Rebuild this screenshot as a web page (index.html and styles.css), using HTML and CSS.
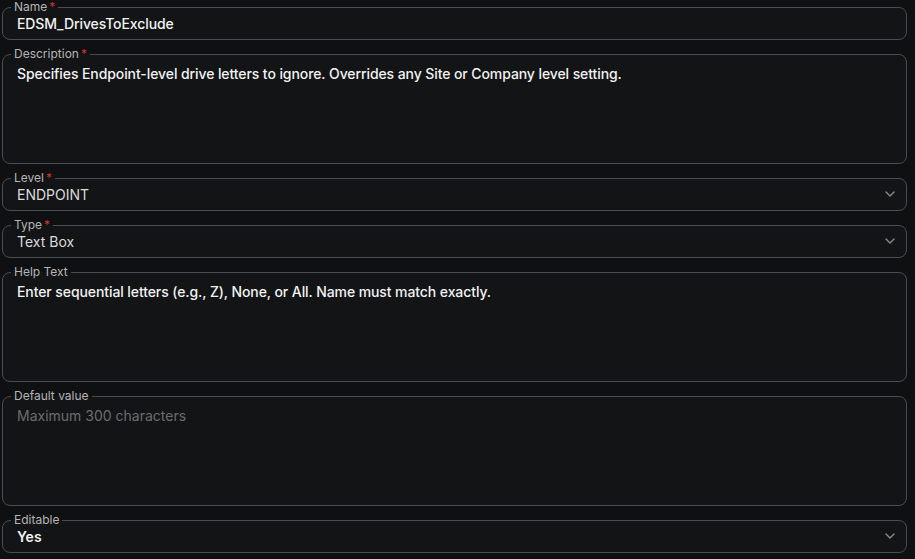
FILE: index.html
```html
<!DOCTYPE html>
<html lang="en">
<head>
    <meta charset="UTF-8">
    <meta name="viewport" content="width=device-width, initial-scale=1.0">
    <title>Custom Field - EDSM_DrivesToExclude</title>
    <link rel="stylesheet" href="styles.css">
</head>
<body>
    <form class="field-form">
        <fieldset class="field">
            <legend>Name<span class="req">*</span></legend>
            <div class="value strong">EDSM_DrivesToExclude</div>
        </fieldset>

        <fieldset class="field">
            <legend>Description<span class="req">*</span></legend>
            <div class="value strong multi">Specifies Endpoint-level drive letters to ignore. Overrides any Site or Company level setting.</div>
        </fieldset>

        <fieldset class="field">
            <legend>Level<span class="req">*</span></legend>
            <div class="value select">
                <span>ENDPOINT</span>
                <svg class="chevron" viewBox="0 0 10 6" width="10" height="6"><path d="M1 1l4 4 4-4"/></svg>
            </div>
        </fieldset>

        <fieldset class="field">
            <legend>Type<span class="req">*</span></legend>
            <div class="value select">
                <span>Text Box</span>
                <svg class="chevron" viewBox="0 0 10 6" width="10" height="6"><path d="M1 1l4 4 4-4"/></svg>
            </div>
        </fieldset>

        <fieldset class="field">
            <legend>Help Text</legend>
            <div class="value strong multi">Enter sequential letters (e.g., Z), None, or All. Name must match exactly.</div>
        </fieldset>

        <fieldset class="field">
            <legend>Default value</legend>
            <div class="value multi placeholder">Maximum 300 characters</div>
        </fieldset>

        <fieldset class="field">
            <legend>Editable</legend>
            <div class="value select">
                <span class="bold">Yes</span>
                <svg class="chevron" viewBox="0 0 10 6" width="10" height="6"><path d="M1 1l4 4 4-4"/></svg>
            </div>
        </fieldset>
    </form>
</body>
</html>
```

FILE: styles.css
```css
html, body {
    margin: 0;
    background: #0f1012;
}
body {
    font-family: Inter, "Noto Sans", sans-serif;
    color: #e6e6e6;
}
.field-form {
    display: flex;
    flex-direction: column;
    gap: 7px;
    width: 905px;
    padding-left: 2px;
}
.field {
    margin: 0;
    padding: 0 8px;
    border: 1px solid #4b4c50;
    border-radius: 8px;
    background: #131416;
    min-width: 0;
}
.field legend {
    padding: 0 3px;
    font-size: 12px;
    line-height: 14px;
    color: #b5b5b5;
}
.req {
    color: #c8343a;
    margin-left: 2px;
}
.value {
    height: 32px;
    margin-top: -7px;
    padding-left: 6px;
    display: flex;
    align-items: center;
    font-size: 14px;
    color: #dcdcdc;
}
.value.strong {
    font-weight: 500;
    color: #f2f2f2;
    letter-spacing: -0.09px;
}
.value.multi {
    height: 109px;
    display: block;
    box-sizing: border-box;
    padding-top: 10px;
    line-height: 20px;
}
.value.placeholder {
    color: #6c6d70;
}
.select {
    justify-content: space-between;
    padding-right: 3px;
}
.bold {
    font-weight: 600;
    color: #f2f2f2;
}
.chevron {
    fill: none;
    stroke: #8a8b8e;
    stroke-width: 1.4;
    stroke-linecap: round;
    stroke-linejoin: round;
}
```
